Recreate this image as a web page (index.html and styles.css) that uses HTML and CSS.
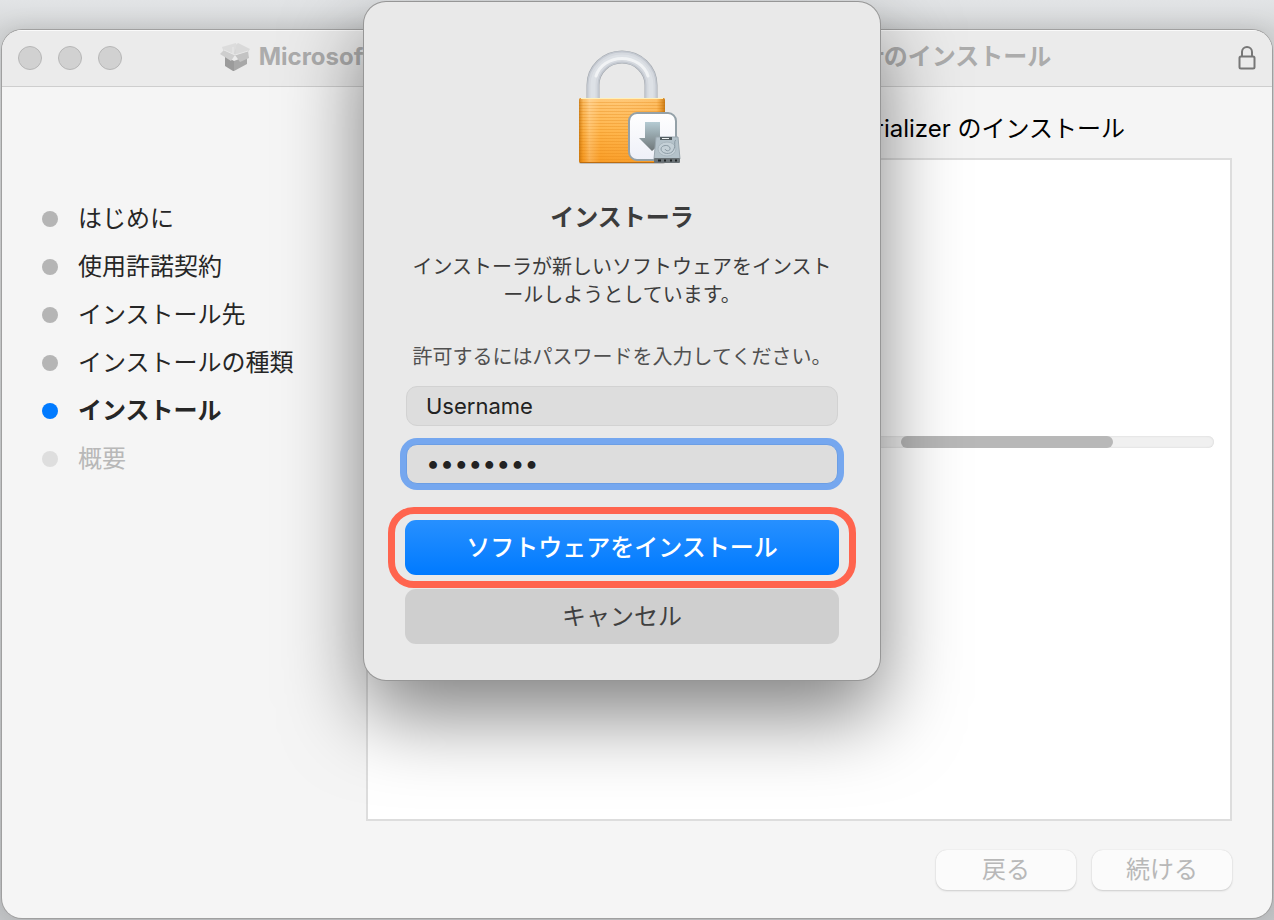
FILE: index.html
```html
<!DOCTYPE html>
<html lang="ja">
<head>
    <meta charset="UTF-8">
    <meta name="viewport" content="width=device-width, initial-scale=1.0">
    <title>インストーラ</title>
    <link rel="stylesheet" href="styles.css">
</head>
<body>
    <div class="window">
        <header class="titlebar">
            <div class="lights">
                <span class="light"></span>
                <span class="light"></span>
                <span class="light"></span>
            </div>
            <div class="title">
                <svg class="box-icon" viewBox="0 0 32 30" aria-hidden="true">
                    <path d="M6 14L15 19V29L14 29L6 24Z" fill="#9b9b9b"/>
                    <path d="M15 19L28 14V22L15 29Z" fill="#a8a8a8"/>
                    <path d="M5 8L18 3L29 8L16 14Z" fill="#d6d6d6"/>
                    <path d="M4 8L3 5L17 1L18 4L14 13Z" fill="#dcdcdc"/>
                    <path d="M17 3L19 1L31 7L29 10L17 13Z" fill="#d9d9d9"/>
                    <path d="M5 8L16 13L12 19L1 12Z" fill="#cecece"/>
                    <path d="M16 13L29 9L30 16L21 20Z" fill="#c3c3c3"/>
                    <path d="M5 8L16 13L29 9M14 5V12" fill="none" stroke="#e8e8e8" stroke-width="1"/>
                </svg>
                <span>Microsoft Office for Mac LTSC 2021 Volume Serializerのインストール</span>
            </div>
            <svg class="lock-icon" viewBox="0 0 18 24" aria-hidden="true">
                <rect x="1.500" y="10.500" width="15" height="12" rx="1.500"/>
                <path d="M4 10.500V6a5 5 0 0 1 10 0v4.500"/>
            </svg>
        </header>

        <div class="content">
            <ul class="steps">
                <li>はじめに</li>
                <li>使用許諾契約</li>
                <li>インストール先</li>
                <li>インストールの種類</li>
                <li class="current">インストール</li>
                <li class="pending">概要</li>
            </ul>
            <main class="main">
                <h1>Microsoft Office Mac LTSC 2021 Volume Serializer のインストール</h1>
                <div class="panel">
                    <div class="progress" role="progressbar">
                        <div class="progress-bar"></div>
                    </div>
                </div>
                <div class="nav">
                    <button type="button" disabled>戻る</button>
                    <button type="button" disabled>続ける</button>
                </div>
            </main>
        </div>
    </div>

    <form class="dialog">
        <svg class="padlock" viewBox="0 0 110 120" aria-hidden="true">
            <defs>
                <linearGradient id="gold" x1="0" y1="0" x2="0" y2="1">
                    <stop offset="0" stop-color="#ffc877"/>
                    <stop offset="0.500" stop-color="#ffb54a"/>
                    <stop offset="1" stop-color="#f99c25"/>
                </linearGradient>
                <linearGradient id="edge" x1="0" y1="0" x2="1" y2="0">
                    <stop offset="0" stop-color="#b86600" stop-opacity="0.700"/>
                    <stop offset="0.050" stop-color="#d87800" stop-opacity="0.150"/>
                    <stop offset="0.120" stop-color="#fff" stop-opacity="0.200"/>
                    <stop offset="0.250" stop-color="#fff" stop-opacity="0"/>
                    <stop offset="0.900" stop-color="#e98000" stop-opacity="0.100"/>
                    <stop offset="1" stop-color="#b86600" stop-opacity="0.800"/>
                </linearGradient>
                <pattern id="brushed" width="90" height="6" patternUnits="userSpaceOnUse">
                    <path d="M0 1.500H90M0 4.500H90" stroke="#e68714" stroke-width="1" opacity="0.350"/>
                </pattern>
                <linearGradient id="arrow" x1="0" y1="0" x2="0" y2="1">
                    <stop offset="0" stop-color="#b5cbd3"/>
                    <stop offset="1" stop-color="#6f7779"/>
                </linearGradient>
                <linearGradient id="tile" x1="0" y1="0" x2="0" y2="1">
                    <stop offset="0" stop-color="#fff"/>
                    <stop offset="1" stop-color="#eef0f8"/>
                </linearGradient>
            </defs>
            <!-- shackle -->
            <path d="M18 49V35a29 28 0 0 1 58 0v14" fill="none" stroke="#a3a8ae" stroke-width="13"/>
            <path d="M18 49V35a29 28 0 0 1 58 0v14" fill="none" stroke="#c3c8d0" stroke-width="12"/>
            <path d="M18 49V35a29 28 0 0 1 58 0v14" fill="none" stroke="#d5d9df" stroke-width="9"/>
            <path d="M18 49V35a29 28 0 0 1 58 0v14" fill="none" stroke="#dde1e6" stroke-width="5"/>
            <path d="M21 26a27 24 0 0 1 52 0" fill="none" stroke="#f1f3f5" stroke-width="3" stroke-linecap="round"/>
            <!-- body -->
            <rect x="4" y="50" width="86" height="64" rx="2" fill="#999" opacity="0.500"/>
            <rect x="4" y="48" width="86" height="65" rx="2" fill="url(#gold)"/>
            <rect x="4" y="50" width="86" height="61" fill="url(#brushed)"/>
            <rect x="4" y="48" width="86" height="65" rx="2" fill="url(#edge)"/>
            <path d="M6 48.500H88" stroke="#fff0b9" stroke-width="1"/>
            <path d="M5 112.500H89" stroke="#bd6d10" stroke-width="1"/>
            <!-- installer tile -->
            <rect x="54" y="63" width="47" height="47" rx="8" fill="url(#tile)" stroke="#94a1a8" stroke-width="2"/>
            <path d="M70 72H85V88H92L77 101L64 88H70Z" fill="url(#arrow)"/>
            <!-- hard drive -->
            <path d="M81 87H103L105 109H79Z" fill="#b4c2ca" stroke="#9aa7af" stroke-width="1"/>
            <rect x="79" y="108" width="26" height="5" rx="1" fill="#6a7276"/>
            <path d="M83 110.500H86M89 110.500H91M95 110.500H97M100 110.500H102" stroke="#202526" stroke-width="2"/>
            <rect x="85" y="87" width="12" height="3" fill="#535d61"/>
            <path d="M87 88.500H94" stroke="#eef2f2" stroke-width="1"/>
            <ellipse cx="92" cy="99" rx="9" ry="7" fill="#c4d0d7" stroke="#a9b6be"/>
            <path d="M101 90C98 91 102 97 97 102C93 105 86 103 86 99C86 95 94 94 95 98C96 101 91 102 90 99" fill="none" stroke="#8b9aa4" stroke-width="1"/>
        </svg>
        <h2>インストーラ</h2>
        <p class="message">インストーラが新しいソフトウェアをインスト<br>ールしようとしています。</p>
        <p class="hint">許可するにはパスワードを入力してください。</p>
        <input class="field" type="text" value="Username" aria-label="ユーザ名">
        <input class="field focused" type="password" value="password" aria-label="パスワード">
        <div class="highlight">
            <button class="primary" type="button">ソフトウェアをインストール</button>
        </div>
        <button class="cancel" type="button">キャンセル</button>
    </form>
</body>
</html>
```
FILE: styles.css
```css
* {
    box-sizing: border-box;
}
body {
    margin: 0;
    padding: 30px 2px 2px;
    min-height: 100vh;
    display: flex;
    position: relative;
    overflow: hidden;
    background: linear-gradient(#e2e4e6, #d6d8d9 30px, #c4c6c8);
    font-family: Inter, "Noto Sans CJK JP", sans-serif;
    font-size: 24px;
    line-height: 36px;
    color: #262626;
}
button, input {
    font-family: inherit;
    font-size: 24px;
}
h1, h2, p, ul {
    margin: 0;
    padding: 0;
}

/* installer window */
.window {
    flex: 1;
    display: flex;
    flex-direction: column;
    background-color: #f5f5f5;
    border-radius: 20px;
    box-shadow: 0 0 0 1px #a0a0a0, 0 0 24px rgba(0, 0, 0, 0.15);
    overflow: hidden;
}
.titlebar {
    display: grid;
    grid-template-columns: 120px 1fr 120px;
    align-items: center;
    height: 57px;
    padding: 0 16px;
    background-color: #ebebeb;
    border-bottom: 1px solid #cecece;
    box-shadow: inset 0 1px #fafafa;
}
.lights {
    display: flex;
    gap: 16px;
}
.light {
    width: 24px;
    height: 24px;
    border: 1px solid #b6b6b6;
    border-radius: 50%;
    background-color: #d1d1d1;
}
.title {
    display: flex;
    align-items: center;
    justify-content: center;
    gap: 8px;
    padding: 0 4px 2px 0;
    font-weight: 700;
    color: #acacac;
    white-space: nowrap;
}
.box-icon {
    width: 32px;
    height: 30px;
}
.lock-icon {
    width: 18px;
    height: 24px;
    justify-self: end;
    fill: none;
    stroke: #777;
    stroke-width: 2;
}
.content {
    flex: 1;
    display: grid;
    grid-template-columns: 324px minmax(0, 1fr);
    padding: 24px 40px 28px;
}
.steps {
    list-style: none;
    padding-top: 84px;
}
.steps li {
    display: flex;
    align-items: center;
    gap: 20px;
    height: 48px;
}
.steps li::before {
    content: "";
    width: 16px;
    height: 16px;
    border-radius: 50%;
    background-color: #b5b5b5;
}
.steps .current {
    font-weight: 700;
}
.steps .current::before {
    background-color: #007aff;
}
.steps .pending {
    color: #b8b8b8;
}
.steps .pending::before {
    background-color: #dedede;
}
.main {
    display: flex;
    flex-direction: column;
}
h1 {
    display: flex;
    justify-content: flex-end;
    height: 47px;
    padding-right: 107px;
    font-size: 24px;
    font-weight: 400;
    color: #000;
    white-space: nowrap;
}
.panel {
    flex: 1;
    display: flex;
    flex-direction: column;
    padding: 276px 16px 0;
    border: 2px solid #ddd;
    background-color: #fff;
}
.progress {
    display: flex;
    justify-content: flex-end;
    height: 12px;
    padding-right: 101px;
    border-radius: 6px;
    background-color: #f0f0f0;
    box-shadow: inset 0 0 2px #ccc;
}
.progress-bar {
    width: 212px;
    border-radius: 6px;
    background-color: #b8b8b8;
}
.nav {
    display: flex;
    justify-content: flex-end;
    gap: 16px;
    padding-top: 29px;
}
.nav button {
    width: 140px;
    height: 40px;
    padding: 0;
    border: 0;
    border-radius: 11px;
    background-color: #fbfbfb;
    box-shadow: 0 0 1px #ccc, 0 1px 2px #ccc;
    color: #b8b8b8;
    line-height: 36px;
}

/* password dialog */
.dialog {
    position: absolute;
    top: 2px;
    left: 50%;
    width: 516px;
    margin-left: -273px;
    padding: 48px 42px 36px;
    display: flex;
    flex-direction: column;
    align-items: center;
    border-radius: 22px;
    background-color: #e9e9e9;
    box-shadow: 0 0 0 1px #969696, 0 34px 80px rgba(0, 0, 0, 0.5);
    color: #3c3c3c;
    text-align: center;
}
.padlock {
    width: 110px;
    height: 120px;
    margin-left: 16px;
}
h2 {
    padding-top: 30px;
    font-size: 24px;
    font-weight: 700;
}
.message {
    padding-top: 17px;
    font-size: 20px;
    line-height: 28px;
    white-space: nowrap;
}
.hint {
    padding: 34px 0 15px;
    font-size: 20px;
    line-height: 28px;
    color: #505050;
    white-space: nowrap;
}
.field {
    width: 100%;
    height: 40px;
    margin-bottom: 18px;
    padding: 0 19px;
    border: 1px solid #d2d2d2;
    border-radius: 11px;
    background-color: #ddd;
    color: #222;
    font-size: 22px;
    outline: none;
}
.field.focused {
    padding-bottom: 2px;
    border-color: #6b9ee5;
    box-shadow: 0 0 0 6px #75a7ef;
    font-size: 25px;
}
.highlight {
    width: 468px;
    margin-top: 5px;
    padding: 6px 10px;
    border: 7px solid #ff644e;
    border-radius: 26px;
}
.primary, .cancel {
    display: block;
    width: 434px;
    height: 55px;
    padding: 0 0 4px;
    border: 0;
    border-radius: 11px;
}
.primary {
    background: linear-gradient(#2790ff, #007aff);
    color: #fff;
    font-weight: 500;
}
.cancel {
    margin-top: 1px;
    background-color: #cfcfcf;
    color: #404040;
}
```
